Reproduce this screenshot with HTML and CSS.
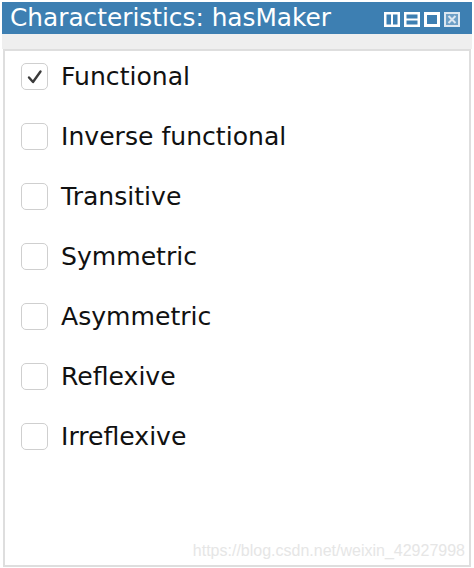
FILE: index.html
```html
<!DOCTYPE html>
<html>
<head>
<meta charset="utf-8">
<link rel="stylesheet" href="styles.css">
</head>
<body>
<div class="window">
  <div class="titlebar">
    <span class="title">Characteristics: hasMaker</span>
    <div class="tools">
      <svg class="ico" width="16" height="15" viewBox="0 0 16 15"><rect x="0" y="0" width="16" height="15" fill="#fff"/><rect x="2.5" y="2.5" width="4.5" height="10" fill="#3d7fb2"/><rect x="9" y="2.5" width="4.5" height="10" fill="#3d7fb2"/></svg>
      <svg class="ico" width="16" height="15" viewBox="0 0 16 15"><rect x="0" y="0" width="16" height="15" fill="#fff"/><rect x="2.5" y="2.5" width="11" height="4" fill="#3d7fb2"/><rect x="2.5" y="8.5" width="11" height="4" fill="#3d7fb2"/></svg>
      <svg class="ico" width="16" height="15" viewBox="0 0 16 15"><rect x="0" y="0" width="16" height="15" fill="#fff"/><rect x="3" y="3" width="10" height="9" fill="#3d7fb2"/></svg>
      <svg class="ico" width="16" height="15" viewBox="0 0 16 15"><rect x="0" y="0" width="16" height="15" fill="#dbe7f1"/><rect x="2" y="2" width="12" height="11" fill="#6d9fc6"/><path d="M4.5 4 L11.5 11 M11.5 4 L4.5 11" stroke="#dbe7f1" stroke-width="2"/></svg>
    </div>
  </div>
  <div class="band"></div>
  <div class="panel">
    <ul class="list">
      <li class="item"><span class="box checked"><svg width="20" height="20" viewBox="0 0 20 20"><path d="M4 10.5 L8 15 L15.5 4.5" fill="none" stroke="#3a3a3a" stroke-width="2.4" stroke-linecap="round" stroke-linejoin="round"/></svg></span><span class="label">Functional</span></li>
      <li class="item"><span class="box"></span><span class="label">Inverse functional</span></li>
      <li class="item"><span class="box"></span><span class="label">Transitive</span></li>
      <li class="item"><span class="box"></span><span class="label">Symmetric</span></li>
      <li class="item"><span class="box"></span><span class="label">Asymmetric</span></li>
      <li class="item"><span class="box"></span><span class="label">Reflexive</span></li>
      <li class="item"><span class="box"></span><span class="label">Irreflexive</span></li>
    </ul>
    <div class="watermark">https://blog.csdn.net/weixin_42927998</div>
  </div>
</div>
</body>
</html>
```
FILE: styles.css
```css
html, body {
  margin: 0;
  padding: 0;
  background: #ffffff;
}
body {
  width: 474px;
  height: 568px;
  overflow: hidden;
  font-family: "DejaVu Sans", "Liberation Sans", sans-serif;
}
.window {
  padding: 2px 2px 1px 2px;
  height: 568px;
  box-sizing: border-box;
  display: flex;
  flex-direction: column;
}
.titlebar {
  height: 32px;
  background: #3d7fb2;
  display: flex;
  align-items: center;
  justify-content: space-between;
  padding: 0 12px 0 8px;
  flex-shrink: 0;
}
.title {
  color: #ffffff;
  font-size: 24.8px;
  line-height: 32px;
  white-space: nowrap;
}
.tools {
  display: flex;
  gap: 4px;
  align-items: center;
  margin-top: 2px;
}
.ico { display: block; }
.band {
  height: 15px;
  background: #efefef;
  flex-shrink: 0;
}
.panel {
  flex: 1;
  margin: 0 1px;
  border: 2px solid #dedede;
  background: #fff;
  display: flex;
  flex-direction: column;
  justify-content: space-between;
}
.list {
  list-style: none;
  margin: 0;
  padding: 12px 0 0 16px;
  display: flex;
  flex-direction: column;
  gap: 33px;
}
.item {
  display: flex;
  align-items: center;
  height: 27px;
}
.box {
  width: 27px;
  height: 27px;
  border: 1.5px solid #cfcfcf;
  border-radius: 5px;
  box-sizing: border-box;
  background: #fff;
  display: flex;
  align-items: center;
  justify-content: center;
  flex-shrink: 0;
}
.label {
  margin-left: 13px;
  font-size: 25.1px;
  color: #111;
  white-space: nowrap;
}
.watermark {
  align-self: flex-end;
  color: #e6e6e6;
  font-family: "Liberation Sans", Arial, sans-serif;
  font-size: 16px;
  padding: 0 4px 5px 0;
}
```
